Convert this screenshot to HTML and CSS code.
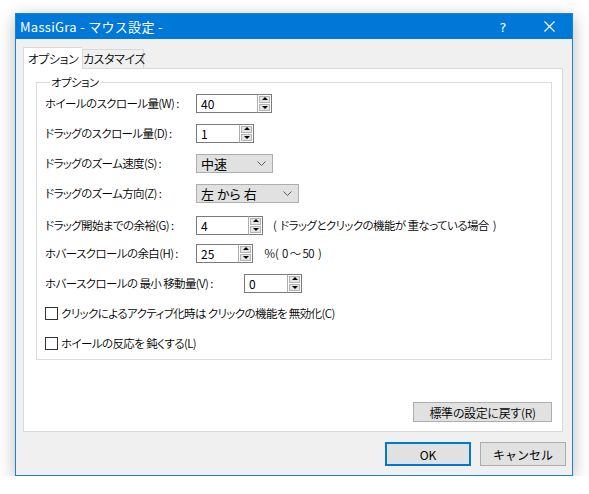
FILE: index.html
```html
<!DOCTYPE html>
<html lang="ja">
<head>
<meta charset="utf-8">
<title>MassiGra - マウス設定 -</title>
<link rel="stylesheet" href="styles.css">
</head>
<body>
<div class="window">
  <div class="titlebar">
    <span class="title">MassiGra - マウス設定 -</span>
    <span class="capbtn help">?</span>
    <span class="capbtn close"><svg width="11" height="11" viewBox="0 0 11 11"><path d="M0.5 0.5 L10.5 10.5 M10.5 0.5 L0.5 10.5" stroke="#fff" stroke-width="1.1" fill="none"/></svg></span>
  </div>
  <div class="client">
    <div class="tabs">
      <div class="tab active">オプション</div>
      <div class="tab">カスタマイズ</div>
    </div>
    <div class="panel">
      <fieldset class="group">
        <legend>オプション</legend>
        <div class="rows">
          <div class="row">
            <span class="label">ホイールのスクロール量(W) :</span>
            <span class="spin"><span class="edit w61">40</span><span class="updown"><span class="ud up"></span><span class="ud down"></span></span></span>
          </div>
          <div class="row">
            <span class="label">ドラッグのスクロール量(D) :</span>
            <span class="spin"><span class="edit w43">1</span><span class="updown"><span class="ud up"></span><span class="ud down"></span></span></span>
          </div>
          <div class="row">
            <span class="label">ドラッグのズーム速度(S) :</span>
            <span class="combo w77"><span>中速</span><svg class="chev" width="9" height="5" viewBox="0 0 9 5"><path d="M0.5 0.5 L4.5 4.5 L8.5 0.5" stroke="#5a5a5a" stroke-width="1" fill="none"/></svg></span>
          </div>
          <div class="row">
            <span class="label">ドラッグのズーム方向(Z) :</span>
            <span class="combo w103"><span>左 から 右</span><svg class="chev" width="9" height="5" viewBox="0 0 9 5"><path d="M0.5 0.5 L4.5 4.5 L8.5 0.5" stroke="#5a5a5a" stroke-width="1" fill="none"/></svg></span>
          </div>
          <div class="row r5">
            <span class="label">ドラッグ開始までの余裕(G) :</span>
            <span class="spin"><span class="edit w52">4</span><span class="updown"><span class="ud up"></span><span class="ud down"></span></span></span>
            <span class="note n1">(  ドラッグとクリックの機能が 重なっている場合  )</span>
          </div>
          <div class="row">
            <span class="label">ホバースクロールの余白(H) :</span>
            <span class="spin"><span class="edit w42">25</span><span class="updown"><span class="ud up"></span><span class="ud down"></span></span></span>
            <span class="note n2">％(  0 ～ 50  )</span>
          </div>
          <div class="row">
            <span class="label wide">ホバースクロールの 最小 移動量(V) :</span>
            <span class="spin"><span class="edit w43">0</span><span class="updown"><span class="ud up"></span><span class="ud down"></span></span></span>
          </div>
          <div class="row">
            <span class="check"></span><span>クリックによるアクティブ化時は クリックの機能を 無効化(C)</span>
          </div>
          <div class="row">
            <span class="check"></span><span>ホイールの反応を 鈍くする(L)</span>
          </div>
        </div>
      </fieldset>
      <div class="resetrow"><span class="btn reset">標準の設定に戻す(R)</span></div>
    </div>
    <div class="buttons">
      <span class="btn dlg default">OK</span>
      <span class="btn dlg">キャンセル</span>
    </div>
  </div>
</div>
</body>
</html>
```

FILE: styles.css
```css
html, body {
  margin: 0;
  padding: 0;
  background: #ffffff;
}
body {
  font-family: "Noto Sans CJK JP", "Noto Sans", sans-serif;
  font-size: 11.5px;
  font-weight: 350;
  letter-spacing: -0.6px;
  color: #000;
  font-feature-settings: "palt";
}
.window {
  box-sizing: border-box;
  width: 558px;
  height: 463px;
  margin: 13px 0 0 15px;
  border: 1px solid #1883d7;
  background: #f0f0f0;
  box-shadow: 0 4px 16px rgba(0, 0, 0, 0.28);
  display: flex;
  flex-direction: column;
}
.titlebar {
  height: 25px;
  background: #0078d7;
  color: #fff;
  display: flex;
  align-items: center;
  font-feature-settings: normal;
  font-weight: 400;
  letter-spacing: 0;
}
.title {
  flex: 1;
  padding-left: 4px;
  font-size: 13px;
  letter-spacing: 0.3px;
  line-height: 25px;
}
.capbtn {
  width: 46px;
  height: 25px;
  display: flex;
  align-items: center;
  justify-content: center;
}
.help {
  font-family: "DejaVu Sans", sans-serif;
  font-size: 13px;
  padding-top: 1px;
}
.client {
  padding: 8px 0 0 7px;
  flex: 1;
}
.tabs {
  display: flex;
  align-items: flex-end;
  height: 21px;
  position: relative;
  z-index: 1;
}
.tab {
  box-sizing: border-box;
  height: 19px;
  width: 62px;
  border: 1px solid #d9d9d9;
  border-bottom: none;
  background: #f0f0f0;
  text-align: center;
  line-height: 18px;
  white-space: nowrap;
  font-size: 12px;
  letter-spacing: -0.4px;
}
.tab.active {
  height: 22px;
  width: 59px;
  margin-bottom: -1px;
  background: #ffffff;
  line-height: 22px;
  border-right: none;
}
.panel {
  box-sizing: border-box;
  width: 540px;
  height: 364px;
  border: 1px solid #d9d9d9;
  background: #ffffff;
  padding: 6px 10px 0 12px;
}
.group {
  margin: 0;
  width: 516px;
  box-sizing: border-box;
  border: 1px solid #dcdcdc;
  padding: 4px 0 6px 8px;
  min-width: 0;
}
.group legend {
  margin-left: 5px;
  padding: 0 1px;
  line-height: 14px;
  height: 14px;
}
.rows {
  display: flex;
  flex-direction: column;
  gap: 10px;
}
.row {
  height: 20px;
  display: flex;
  align-items: center;
  white-space: pre;
}
.row.r5 {
  margin-top: 2px;
  margin-bottom: -2px;
}
.label {
  width: 151px;
  flex: none;
}
.label.wide {
  width: 199px;
}
.spin {
  display: flex;
  height: 19px;
}
.edit {
  box-sizing: border-box;
  height: 19px;
  border: 1px solid #7a7a7a;
  border-right: none;
  background: #fff;
  padding-left: 4px;
  line-height: 17px;
  font-size: 12px;
  font-weight: 400;
  letter-spacing: 0;
}
.w61 { width: 61px; }
.w43 { width: 43px; }
.w52 { width: 52px; }
.w42 { width: 42px; }
.updown {
  box-sizing: border-box;
  width: 15px;
  height: 19px;
  border: 1px solid #7a7a7a;
  border-left: 1px solid #adadad;
  display: flex;
  flex-direction: column;
  background: #fff;
  padding: 1px;
  gap: 1px;
}
.ud {
  flex: 1;
  background: #e5e5e5;
  border: 1px solid #b5b5b5;
  position: relative;
}
.ud::after {
  content: "";
  position: absolute;
  left: 50%;
  top: 50%;
  width: 0;
  height: 0;
  margin-left: -3px;
  border-left: 3px solid transparent;
  border-right: 3px solid transparent;
}
.ud.up::after {
  margin-top: -2px;
  border-bottom: 3px solid #000;
}
.ud.down::after {
  margin-top: -1px;
  border-top: 3px solid #000;
}
.combo {
  box-sizing: border-box;
  height: 19px;
  border: 1px solid #adadad;
  background: #e1e1e1;
  display: flex;
  align-items: center;
  justify-content: space-between;
  padding: 0 6px 0 4px;
  font-size: 13px;
  font-weight: 400;
  letter-spacing: 0;
}
.w77 { width: 77px; }
.w103 { width: 103px; }
.chev {
  display: block;
}
.note {
  margin-left: 10px;
}
.n2 {
  margin-left: 11px;
}
.check {
  box-sizing: border-box;
  width: 13px;
  height: 13px;
  border: 1px solid #333;
  background: #fff;
  margin-right: 3px;
  flex: none;
}
.btn {
  box-sizing: border-box;
  display: inline-flex;
  align-items: center;
  justify-content: center;
  background: #e1e1e1;
  border: 1px solid #adadad;
}
.resetrow {
  display: flex;
  justify-content: flex-end;
  width: 516px;
  margin-top: 42px;
}
.reset {
  width: 139px;
  height: 20px;
  font-size: 12px;
  letter-spacing: -0.3px;
}
.buttons {
  display: flex;
  justify-content: flex-end;
  gap: 9px;
  width: 543px;
  margin-top: 10px;
}
.dlg {
  width: 86px;
  height: 24px;
  font-size: 12px;
  font-weight: 400;
  letter-spacing: 0;
  font-feature-settings: normal;
}
.dlg.default {
  border: 2px solid #0078d7;
}
```
